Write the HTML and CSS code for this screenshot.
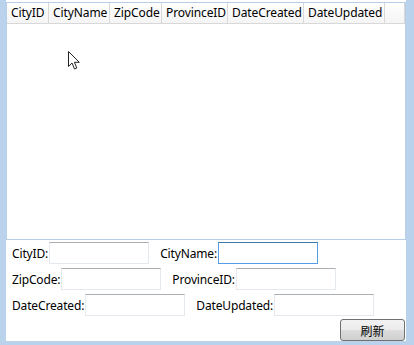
FILE: index.html
```html
<!DOCTYPE html>
<html lang="en">
<head>
	<meta charset="UTF-8">
	<title>城市</title>
	<link rel="stylesheet" href="styles.css">
</head>
<body>
	<div class="window">
		<div class="client">
			<div class="grid">
				<div class="grid_head">
					<div class="col c1">CityID</div>
					<div class="col c2">CityName</div>
					<div class="col c3">ZipCode</div>
					<div class="col c4">ProvinceID</div>
					<div class="col c5">DateCreated</div>
					<div class="col c6">DateUpdated</div>
					<div class="col c7"></div>
				</div>
				<svg class="cursor" width="13" height="20" viewBox="0 0 13 20">
					<path d="M0.5 0.5 L0.5 15.5 L4 12 L6.5 18 L8.8 17 L6.4 11.3 L11.3 11.3 Z" fill="#fff" stroke="#222" stroke-width="1"/>
				</svg>
			</div>
			<div class="form">
				<div class="row">
					<label>CityID:</label><input type="text" class="box"/>
					<label class="next">CityName:</label><input type="text" class="box focus"/>
				</div>
				<div class="row">
					<label>ZipCode:</label><input type="text" class="box"/>
					<label class="next">ProvinceID:</label><input type="text" class="box"/>
				</div>
				<div class="row">
					<label>DateCreated:</label><input type="text" class="box"/>
					<label class="next">DateUpdated:</label><input type="text" class="box"/>
				</div>
				<div class="btn_row">
					<button class="btn">刷新</button>
				</div>
			</div>
		</div>
	</div>
</body>
</html>
```
FILE: styles.css
```css
body{
	margin:0;
	font-family:"Noto Sans","Noto Sans CJK SC",sans-serif;
	font-size:12px;
	color:#000;
}
.window{
	width:414px;
	height:345px;
	box-sizing:border-box;
	padding:0 8px 6px 6px;
	background-color:#bad2ec;
	display:flex;
	flex-direction:column;
}
.client{
	flex:1;
	background-color:#fff;
	display:flex;
	flex-direction:column;
}
.grid{
	margin-top:2px;
	height:236px;
	border:1px solid #b6cee8;
	position:relative;
}
.grid_head{
	display:flex;
	height:20px;
}
.col{
	box-sizing:border-box;
	height:21px;
	line-height:20px;
	padding-left:4px;
	border-right:1px solid #d8d8d8;
	border-bottom:1px solid #d8d8d8;
	background:linear-gradient(#fff,#f4f4f4);
	white-space:nowrap;
	letter-spacing:-0.1px;
}
.c1{width:42px;}
.c2{width:61px;}
.c3{width:52px;}
.c4{width:66px;}
.c5{width:76px;}
.c6{width:81px;}
.c7{width:20px;}
.cursor{
	position:absolute;
	left:61px;
	top:48px;
}
.form{
	padding:2px 1px 0 6px;
}
.row{
	display:flex;
	align-items:center;
	height:22px;
	margin-bottom:4px;
}
.row label{
	margin-right:1px;
	letter-spacing:-0.15px;
}
.row .next{
	margin-left:11px;
}
.box{
	box-sizing:border-box;
	width:100px;
	height:22px;
	margin:0;
	border:1px solid #e3e9ef;
	border-top-color:#abadb3;
	outline:none;
}
.box.focus{
	border-color:#569de5;
	border-top-color:#3d7bad;
}
.btn_row{
	display:flex;
	justify-content:flex-end;
	margin-top:-1px;
}
.btn{
	width:65px;
	height:22px;
	padding:0;
	font-family:"Noto Sans CJK SC",sans-serif;
	font-size:12px;
	color:#000;
	border:1px solid #707070;
	border-radius:3px;
	background:linear-gradient(#f2f2f2 0%,#ebebeb 50%,#dddddd 51%,#cfcfcf 100%);
}
```
